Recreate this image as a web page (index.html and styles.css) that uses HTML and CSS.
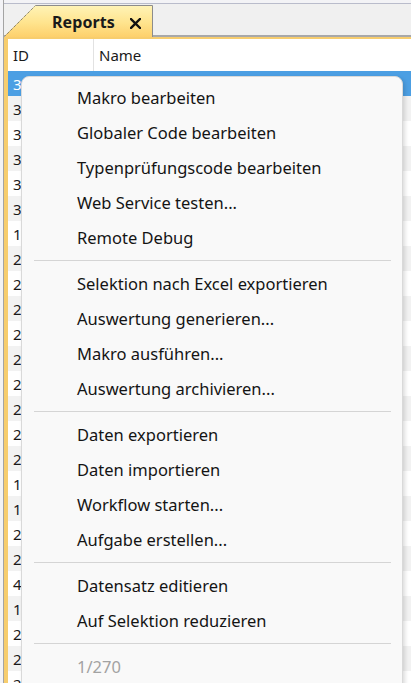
FILE: index.html
```html
<!DOCTYPE html>
<html lang="de">
<head>
<meta charset="utf-8">
<title>Reports</title>
<link rel="stylesheet" href="styles.css">
</head>
<body>
<div class="app">
  <div class="tabbar">
    <div class="tab">
      <svg class="tab-bg" width="148" height="32" viewBox="0 0 148 32" aria-hidden="true">
        <defs>
          <linearGradient id="tabfill" x1="0" y1="0" x2="0" y2="1">
            <stop offset="0" stop-color="#fff4b8"/>
            <stop offset="0.55" stop-color="#ffe48e"/>
            <stop offset="1" stop-color="#fdd06c"/>
          </linearGradient>
        </defs>
        <polygon points="0,30.5 30.5,0 147.5,0 147.5,32 0,32" fill="url(#tabfill)"/>
        <line x1="0.5" y1="30.5" x2="30.5" y2="0.5" stroke="#5a5a5a" stroke-width="1" stroke-dasharray="1 1"/>
        <polyline points="30.5,0.5 147.5,0.5 147.5,32" fill="none" stroke="#8c8c8c" stroke-width="1"/>
      </svg>
      <span class="tab-title">Reports</span>
      <svg class="tab-close" width="11" height="11" viewBox="0 0 11 11" aria-hidden="true">
        <path d="M1 1 L10 10 M10 1 L1 10" stroke="#111" stroke-width="2.4" stroke-linecap="square"/>
      </svg>
    </div>
  </div>
  <div class="frame">
    <div class="grid">
      <div class="grid-head">
        <div class="col-id">ID</div>
        <div class="col-name">Name</div>
      </div>
      <div class="grid-body">
        <div class="row selected"><div class="col-id">3</div><div class="col-name"></div></div>
        <div class="row"><div class="col-id">3</div><div class="col-name"></div></div>
        <div class="row"><div class="col-id">3</div><div class="col-name"></div></div>
        <div class="row"><div class="col-id">3</div><div class="col-name"></div></div>
        <div class="row"><div class="col-id">3</div><div class="col-name"></div></div>
        <div class="row"><div class="col-id">3</div><div class="col-name"></div></div>
        <div class="row"><div class="col-id">1</div><div class="col-name"></div></div>
        <div class="row"><div class="col-id">2</div><div class="col-name"></div></div>
        <div class="row"><div class="col-id">2</div><div class="col-name"></div></div>
        <div class="row"><div class="col-id">2</div><div class="col-name"></div></div>
        <div class="row"><div class="col-id">2</div><div class="col-name"></div></div>
        <div class="row"><div class="col-id">2</div><div class="col-name"></div></div>
        <div class="row"><div class="col-id">2</div><div class="col-name"></div></div>
        <div class="row"><div class="col-id">2</div><div class="col-name"></div></div>
        <div class="row"><div class="col-id">2</div><div class="col-name"></div></div>
        <div class="row"><div class="col-id">2</div><div class="col-name"></div></div>
        <div class="row"><div class="col-id">1</div><div class="col-name"></div></div>
        <div class="row"><div class="col-id">1</div><div class="col-name"></div></div>
        <div class="row"><div class="col-id">2</div><div class="col-name"></div></div>
        <div class="row"><div class="col-id">2</div><div class="col-name"></div></div>
        <div class="row"><div class="col-id">4</div><div class="col-name"></div></div>
        <div class="row"><div class="col-id">1</div><div class="col-name"></div></div>
        <div class="row"><div class="col-id">2</div><div class="col-name"></div></div>
        <div class="row"><div class="col-id">2</div><div class="col-name"></div></div>
        <div class="row"><div class="col-id">2</div><div class="col-name"></div></div>
      </div>
    </div>
  </div>

  <div class="menu">
    <div class="item">Makro bearbeiten</div>
    <div class="item">Globaler Code bearbeiten</div>
    <div class="item">Typenprüfungscode bearbeiten</div>
    <div class="item">Web Service testen...</div>
    <div class="item">Remote Debug</div>
    <div class="sep"></div>
    <div class="item">Selektion nach Excel exportieren</div>
    <div class="item">Auswertung generieren...</div>
    <div class="item">Makro ausführen...</div>
    <div class="item">Auswertung archivieren...</div>
    <div class="sep"></div>
    <div class="item">Daten exportieren</div>
    <div class="item">Daten importieren</div>
    <div class="item">Workflow starten...</div>
    <div class="item">Aufgabe erstellen...</div>
    <div class="sep"></div>
    <div class="item">Datensatz editieren</div>
    <div class="item">Auf Selektion reduzieren</div>
    <div class="sep"></div>
    <div class="item disabled">1/270</div>
  </div>
</div>
</body>
</html>
```

FILE: styles.css
```css
html, body {
  margin: 0;
  padding: 0;
}

body {
  width: 411px;
  height: 683px;
  overflow: hidden;
  background: #f3f3f6;
  font-family: "Noto Sans", "Open Sans", sans-serif;
  color: #1a1a1a;
}

.app {
  position: relative;
  margin-left: 3px;
  height: 680px;
  padding-top: 3px;
  border-left: 1px solid #a4a4a4;
}

.tabbar {
  display: flex;
  height: 31px;
  border-top: 1px solid #b9bccb;
  background: #f0f0f0;
}

.tab {
  position: relative;
  z-index: 2;
  display: flex;
  align-items: center;
  width: 148px;
  height: 32px;
  margin-top: 1px;
  margin-left: 1px;
  box-sizing: border-box;
  padding-left: 47px;
  padding-top: 1px;
}

.tab-bg {
  position: absolute;
  left: 0;
  top: 0;
}

.tab-title {
  position: relative;
  font-weight: 700;
  font-size: 16px;
  letter-spacing: 0.1px;
}

.tab-close {
  position: relative;
  margin-left: 15px;
  margin-top: 3px;
}

.frame {
  border-top: 2px solid #a8a8a8;
  background: #f7cd6e;
  padding: 2px 0 0 4px;
  height: 648px;
  box-sizing: border-box;
}

.grid {
  background: #ffffff;
  height: 100%;
  overflow: hidden;
  font-size: 15px;
}

.grid-head {
  display: flex;
  height: 32px;
  align-items: center;
  background: #ffffff;
}

.grid-head .col-id {
  border-right: 1px solid #e2e2e2;
  height: 100%;
  display: flex;
  align-items: center;
}

.col-id {
  width: 86px;
  padding-left: 5px;
  box-sizing: border-box;
  flex: none;
}

.col-name {
  padding-left: 5px;
}

.row {
  display: flex;
  align-items: center;
  height: 25px;
  background: #ffffff;
}

.row:nth-child(even) {
  background: #f2f2f2;
}

.row.selected {
  background: #4c9fe3;
  color: #ffffff;
}

.menu {
  position: absolute;
  left: 17px;
  top: 76px;
  width: 382px;
  height: 640px;
  box-sizing: border-box;
  padding-top: 3px;
  background: #f9f9f9;
  border: 1px solid #d9d9d9;
  border-radius: 8px;
  box-shadow: 2px 2px 4px rgba(0, 0, 0, 0.14);
  font-size: 16.5px;
  z-index: 3;
}

.item {
  height: 35px;
  display: flex;
  align-items: center;
  padding-left: 55px;
  color: #141414;
}

.item.disabled {
  color: #a2a2a2;
}

.sep {
  height: 11px;
  display: flex;
  align-items: center;
  padding: 0 11px 0 12px;
}

.sep::before {
  content: "";
  display: block;
  flex: 1;
  height: 1px;
  background: #d5d5d5;
}
```
